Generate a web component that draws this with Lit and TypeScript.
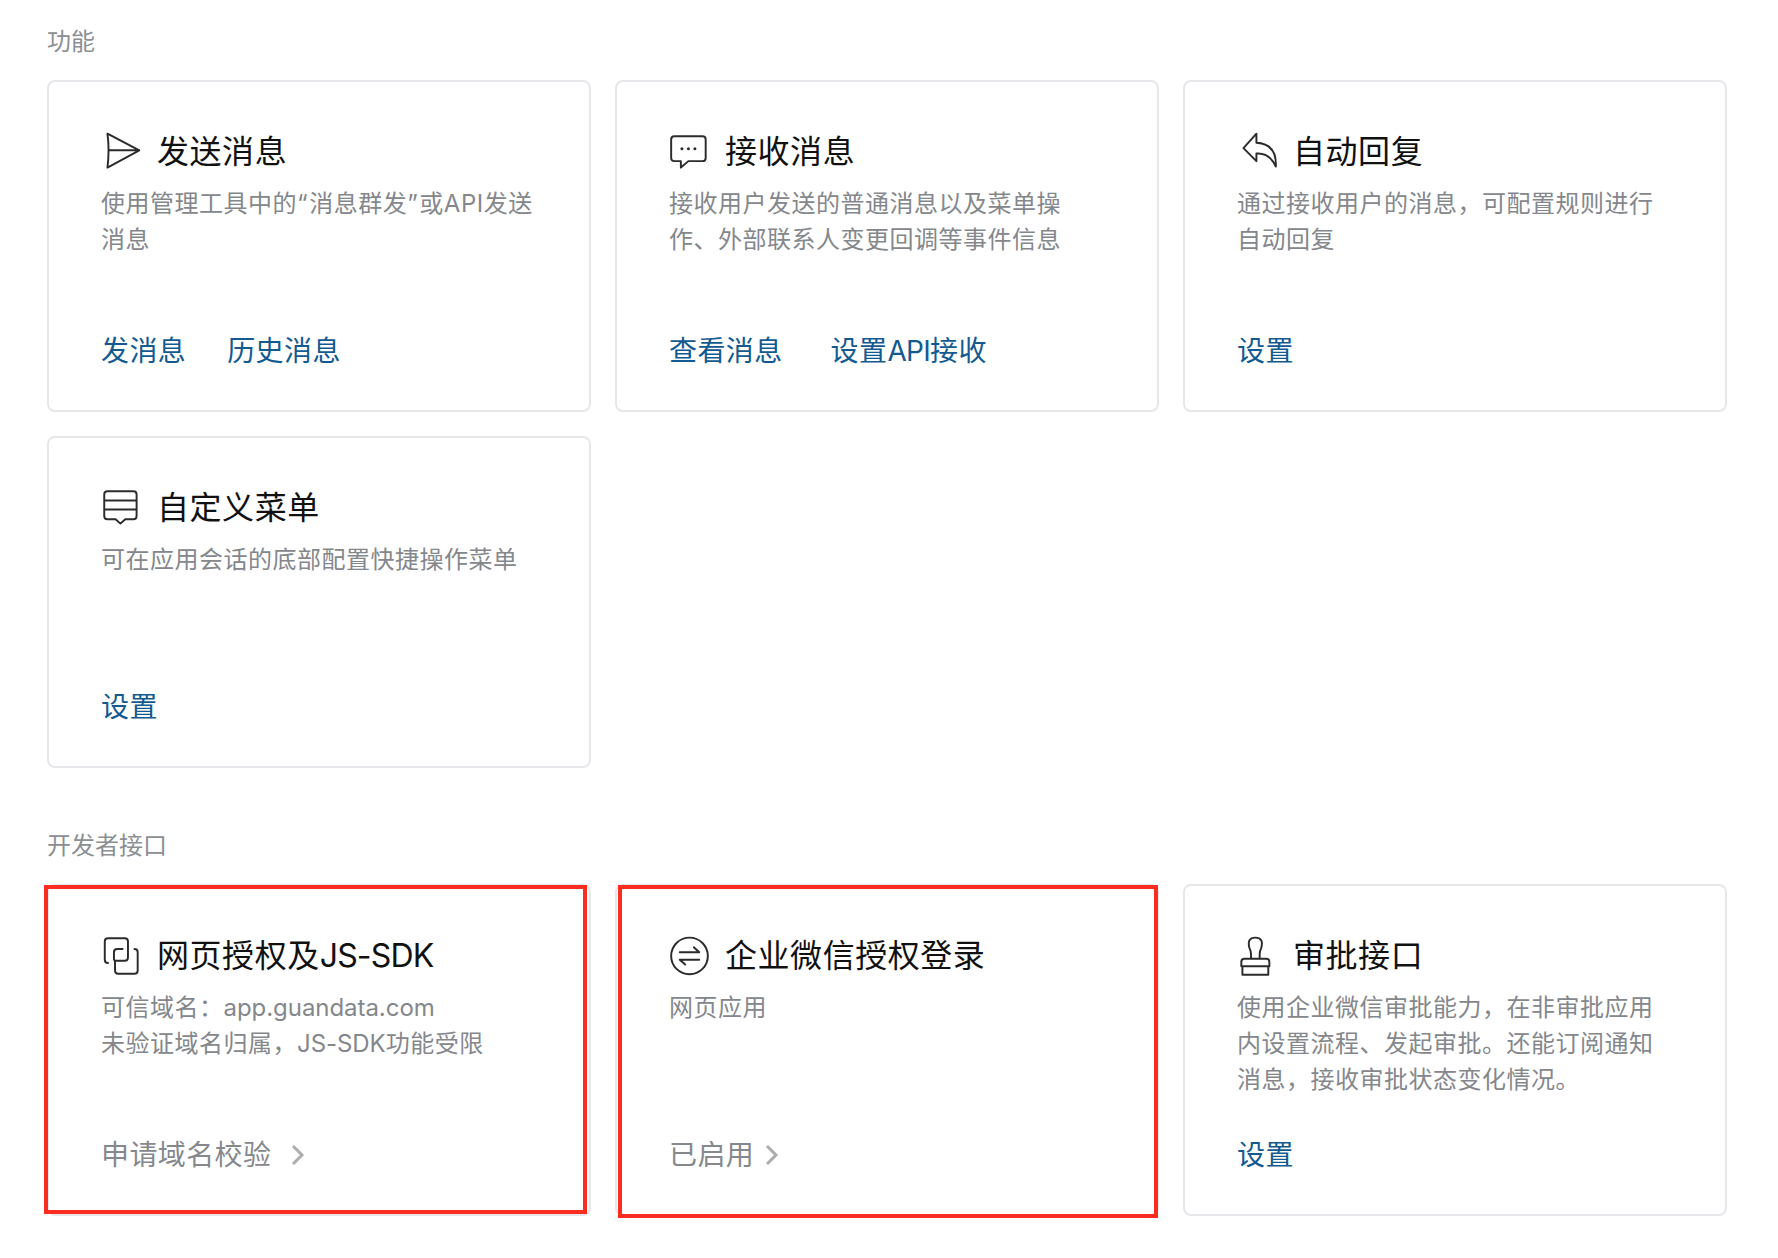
import { LitElement, html, css, svg } from "lit";
import { customElement } from "lit/decorators.js";

const icons: Record<string, unknown> = {
  send: svg`<path d="M6 1.500 L35.500 17 L6 33 Q8 17 6 1.500 Z M8 17 H35.500"/>`,
  chat: svg`<path d="M5 4 H31 Q34 4 34 7 V24 Q34 27 31 27 H18 L11 33 V27 H5 Q2 27 2 24 V7 Q2 4 5 4 Z"/><circle class="dot" cx="12" cy="15.500" r="1.4"/><circle class="dot" cx="18" cy="15.500" r="1.4"/><circle class="dot" cx="24" cy="15.500" r="1.4"/>`,
  reply: svg`<path d="M18 1.500 L6 15 L18 27 V20 Q30 19 36 32 Q37 11 18 10 Z"/>`,
  menu: svg`<path d="M6 3 H30 Q33 3 33 6 V26 Q33 29 30 29 H22.500 L18 33 L13.500 29 H6 Q3 29 3 26 V6 Q3 3 6 3 Z M3 11.500 H33 M3 20 H33"/>`,
  link: svg`<path d="M6.500 25 Q3.500 25 3.500 22 V5 Q3.500 2 6.500 2 H22 Q25 2 25 5 V20 Q25 23 22 23 H14 Q12 23 12 21 V15 Q12 12 15 12 H20"/><path d="M31 12 Q34 12 34 15 V32 Q34 35 31 35 H16 Q13 35 13 32 V23"/>`,
  swap: svg`<circle cx="19" cy="18.500" r="17"/><path d="M10 15 H28 L23 10.500 M28 22 H10 L15 26.500"/>`,
  stamp: svg`<path d="M13 21 V17 Q13 14 11.500 11 Q9 1.500 17 1.500 Q25 1.500 22.500 11 Q21 14 21 17 V21 M4 28 V24 Q4 21 7 21 H27 Q30 21 30 24 V28 Z M5 28 V36 H29 V28"/>`,
};

type Card = { icon: string; title: unknown; desc: unknown[]; links?: unknown[]; gray?: string; gap?: number; linkGap?: number };

const feature: Card[] = [
  { icon: "send", title: "发送消息", desc: [html`使用管理工具中的<span class="q">“</span>消息群发<span class="q">”</span>或API发送`, "消息"], links: ["发消息", "历史消息"], linkGap: 41 },
  { icon: "chat", title: "接收消息", desc: ["接收用户发送的普通消息以及菜单操", "作、外部联系人变更回调等事件信息"], links: ["查看消息", html`设置<span class="api">API</span>接收`], linkGap: 48 },
  { icon: "reply", title: "自动回复", desc: ["通过接收用户的消息，可配置规则进行", "自动回复"], links: ["设置"] },
  { icon: "menu", title: "自定义菜单", desc: ["可在应用会话的底部配置快捷操作菜单"], links: ["设置"] },
];
const dev: Card[] = [
  { icon: "link", title: html`网页授权及<span class="latin">JS-SDK</span>`, desc: [html`可信域名：<span class="tight">app.guandata.com</span>`, html`未验证域名归属，<span class="tight">JS-SDK</span>功能受限`], gray: "申请域名校验", gap: 20 },
  { icon: "swap", title: "企业微信授权登录", desc: ["网页应用"], gray: "已启用", gap: 11 },
  { icon: "stamp", title: "审批接口", desc: ["使用企业微信审批能力，在非审批应用", "内设置流程、发起审批。还能订阅通知", "消息，接收审批状态变化情况。"], links: ["设置"] },
];

@customElement("app-root")
export class AppRoot extends LitElement {
  static styles = css`
    :host {
      display: block;
      position: relative;
      width: 1778px;
      height: 1258px;
      background: #fff;
      box-sizing: border-box;
      padding: 25px 51px 0 47px;
      font-family: "Inter", "Noto Sans CJK SC", sans-serif;
      overflow: hidden;
    }
    .label {
      font-size: 24px;
      line-height: 34px;
      color: #8b8e93;
      height: 34px;
    }
    .grid {
      display: grid;
      grid-template-columns: repeat(3, 544px);
      grid-auto-rows: 332px;
      gap: 24px 24px;
      margin-top: 21px;
    }
    .grid + .label { margin-top: 61px; }
    .card {
      box-sizing: border-box;
      border: 2px solid #e6e7eb;
      border-radius: 8px;
      padding: 48px 52px 0 52px;
      display: flex;
      flex-direction: column;
      background: #fff;
    }
    .head {
      display: flex;
      align-items: center;
      height: 44px;
      gap: 15px;
    }
    .head svg {
      width: 41px;
      height: 41px;
      flex: none;
      fill: none;
      stroke: #2b2b2e;
      stroke-width: 1.8;
      stroke-linejoin: round;
      stroke-linecap: round;
    }
    .head svg .dot { fill: #2b2b2e; stroke: none; }
    .title {
      font-size: 32px;
      line-height: 44px;
      color: #111;
      letter-spacing: 0.55px;
    }
    .latin { letter-spacing: -0.85px; }
    .desc {
      margin-top: 12px;
      font-size: 24px;
      line-height: 36px;
      color: #84878c;
      height: 108px;
      letter-spacing: 0.5px;
      white-space: nowrap;
    }
    .q { letter-spacing: 1.6px; }
    .tight { letter-spacing: -0.05px; }
    .actions {
      margin-top: 37px;
      display: flex;
      align-items: center;
      font-size: 28px;
      line-height: 40px;
      letter-spacing: 0.4px;
      white-space: nowrap;
    }
    .api { letter-spacing: -0.7px; }
    .link { color: #135a91; }
    .gray {
      color: #85888d;
      display: flex;
      align-items: center;
    }
    .gray svg {
      width: 14px;
      height: 22px;
      fill: none;
      stroke: #adadad;
      stroke-width: 3;
    }
    .mark {
      position: absolute;
      box-sizing: border-box;
      border: 4px solid #fb2c20;
    }
    .m1 { left: 44px; top: 885px; width: 543px; height: 329px; }
    .m2 { left: 618px; top: 885px; width: 540px; height: 333px; }
  `;

  private card(c: Card) {
    return html`<div class="card">
      <div class="head">
        <svg viewBox="0 0 38 38">${icons[c.icon]}</svg>
        <span class="title">${c.title}</span>
      </div>
      <div class="desc">${c.desc.map((d) => html`<div>${d}</div>`)}</div>
      <div class="actions" style="gap:${c.linkGap ?? 0}px">
        ${c.links?.map((l) => html`<span class="link">${l}</span>`)}
        ${c.gray
          ? html`<span class="gray" style="gap:${c.gap}px">${c.gray}<svg viewBox="0 0 14 22"><path d="M2 2 L11 11 L2 20"/></svg></span>`
          : ""}
      </div>
    </div>`;
  }

  render() {
    return html`
      <div class="label">功能</div>
      <div class="grid">${feature.map((c) => this.card(c))}</div>
      <div class="label">开发者接口</div>
      <div class="grid">${dev.map((c) => this.card(c))}</div>
      <div class="mark m1"></div>
      <div class="mark m2"></div>
    `;
  }
}
